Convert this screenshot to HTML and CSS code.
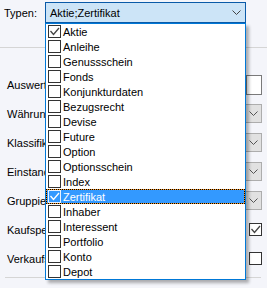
FILE: index.html
```html
<!DOCTYPE html>
<html lang="de">
<head>
    <meta charset="UTF-8">
    <title>Typen</title>
    <link rel="stylesheet" href="styles.css">
</head>
<body>
    <div class="top-row">
        <span class="lbl">Typen:</span>
        <div class="combo-main">
            <span>Aktie;Zertifikat</span>
            <svg class="chev" width="9" height="5" viewBox="0 0 9 5"><polyline points="0.5,0.5 4.5,4.5 8.5,0.5" fill="none" stroke="#444" stroke-width="1"/></svg>
        </div>
    </div>
    <div class="sep"></div>

    <!-- Formular hinter der Liste -->
    <div class="rows">
        <div class="row"><span>Auswertung</span><div class="textbox"></div></div>
        <div class="row"><span>Währung</span><div class="combo"><svg width="9" height="5" viewBox="0 0 9 5"><polyline points="0.5,0.5 4.5,4.5 8.5,0.5" fill="none" stroke="#555" stroke-width="1"/></svg></div></div>
        <div class="row"><span>Klassifikation</span><div class="combo"><svg width="9" height="5" viewBox="0 0 9 5"><polyline points="0.5,0.5 4.5,4.5 8.5,0.5" fill="none" stroke="#555" stroke-width="1"/></svg></div></div>
        <div class="row"><span>Einstandskurs</span><div class="combo"><svg width="9" height="5" viewBox="0 0 9 5"><polyline points="0.5,0.5 4.5,4.5 8.5,0.5" fill="none" stroke="#555" stroke-width="1"/></svg></div></div>
        <div class="row"><span>Gruppierung</span><div class="combo"><svg width="9" height="5" viewBox="0 0 9 5"><polyline points="0.5,0.5 4.5,4.5 8.5,0.5" fill="none" stroke="#555" stroke-width="1"/></svg></div></div>
        <div class="row"><span>Kaufspesen</span><div class="check"><svg width="11" height="11" viewBox="0 0 11 11"><polyline points="1.5,5 4.5,8.5 10,2" fill="none" stroke="#444" stroke-width="1.3"/></svg></div></div>
        <div class="row"><span>Verkaufsspesen</span><div class="check"></div></div>
    </div>
    <div class="sep bottom"></div>

    <!-- aufgeklappte Liste -->
    <div class="dropdown">
        <div class="item"><span class="box"><svg width="11" height="11" viewBox="0 0 11 11"><polyline points="1.5,5 4.5,8.5 10,2" fill="none" stroke="#444" stroke-width="1.3"/></svg></span>Aktie</div>
        <div class="item"><span class="box"></span>Anleihe</div>
        <div class="item"><span class="box"></span>Genussschein</div>
        <div class="item"><span class="box"></span>Fonds</div>
        <div class="item"><span class="box"></span>Konjunkturdaten</div>
        <div class="item"><span class="box"></span>Bezugsrecht</div>
        <div class="item"><span class="box"></span>Devise</div>
        <div class="item"><span class="box"></span>Future</div>
        <div class="item"><span class="box"></span>Option</div>
        <div class="item"><span class="box"></span>Optionsschein</div>
        <div class="item"><span class="box"></span>Index</div>
        <div class="item sel"><span class="box"><svg width="11" height="11" viewBox="0 0 11 11"><polyline points="1.5,5 4.5,8.5 10,2" fill="none" stroke="#fff" stroke-width="1.3"/></svg></span>Zertifikat</div>
        <div class="item"><span class="box"></span>Inhaber</div>
        <div class="item"><span class="box"></span>Interessent</div>
        <div class="item"><span class="box"></span>Portfolio</div>
        <div class="item"><span class="box"></span>Konto</div>
        <div class="item"><span class="box"></span>Depot</div>
    </div>
</body>
</html>
```

FILE: styles.css
```css
body {
    margin: 0;
    width: 267px;
    height: 288px;
    background: #f4f5fa;
    font-family: "Liberation Sans", Arial, sans-serif;
    font-size: 11px;
    color: #000;
    position: relative;
    overflow: hidden;
}

.top-row {
    display: flex;
    align-items: center;
    padding: 2px 0 0 4px;
}
.top-row .lbl { width: 41px; }

.combo-main {
    width: 201px;
    height: 21px;
    box-sizing: border-box;
    border: 1px solid #0a5aa8;
    background: #cce4f7;
    display: flex;
    align-items: center;
    justify-content: space-between;
    padding: 0 4px 0 4px;
}

.sep {
    height: 1px;
    background: #d5d5d5;
    margin-top: 24px;
}
.sep.bottom {
    margin: 4px 6px 0 5px;
}

.rows {
    margin-top: 22px;
    padding: 0 5px 0 7px;
}
.row {
    height: 29px;
    display: flex;
    align-items: center;
    justify-content: space-between;
}

.textbox {
    width: 16px;
    height: 20px;
    box-sizing: border-box;
    border: 1px solid #7a7a7a;
    background: #fff;
}
.combo {
    width: 140px;
    height: 19px;
    box-sizing: border-box;
    border: 1px solid #adadad;
    background: #e1e1e1;
    display: flex;
    align-items: center;
    justify-content: flex-end;
    padding-right: 3px;
}
.check {
    width: 13px;
    height: 13px;
    box-sizing: border-box;
    border: 1px solid #333;
    background: #fff;
}
.check svg, .box svg { display: block; }

/* Liste */
.dropdown {
    position: absolute;
    left: 45px;
    top: 23px;
    width: 201px;
    box-sizing: border-box;
    border: 1px solid #0078d7;
    background: #fff;
    box-shadow: 3px 3px 3px rgba(0, 0, 0, 0.3);
}
.item {
    height: 15px;
    display: flex;
    align-items: center;
    padding-left: 2px;
    box-sizing: border-box;
}
.item .box {
    width: 13px;
    height: 13px;
    box-sizing: border-box;
    border: 1px solid #333;
    background: #fff;
    margin-right: 2px;
}
.item.sel {
    background: #3399ff;
    color: #fff;
    border: 1px solid #f7931e;
    outline: 1px dotted #000;
    outline-offset: -1px;
    padding-left: 1px;
}
.item.sel .box {
    background: transparent;
    border-color: #e8f2ff;
}
```
